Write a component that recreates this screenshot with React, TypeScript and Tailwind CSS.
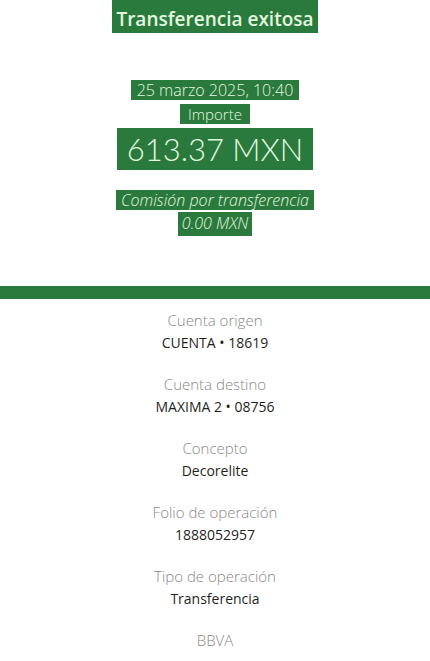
import React from 'react';

const rows = [
  { label: 'Cuenta origen', value: 'CUENTA • 18619' },
  { label: 'Cuenta destino', value: 'MAXIMA 2 • 08756' },
  { label: 'Concepto', value: 'Decorelite' },
  { label: 'Folio de operación', value: '1888052957' },
  { label: 'Tipo de operación', value: 'Transferencia' },
];

const App: React.FC = () => {
  return (
    <div className="w-[430px] h-[661px] overflow-hidden bg-white font-['Open_Sans',sans-serif]">
      {/* encabezado */}
      <div className="flex flex-col items-center">
        <span className="px-[4px] pt-[8px] pb-[2px] bg-[#2a7a3e] text-[#e4f7df] text-[19px] font-semibold leading-[23px]">
          Transferencia exitosa
        </span>

        <span className="mt-[47px] px-[6px] bg-[#2a7a3e] text-[#e4f7df] text-[16px] font-light leading-[20px]">
          25 marzo 2025, 10:40
        </span>
        <span className="mt-[4px] px-[8px] bg-[#2a7a3e] text-[#e4f7df] text-[15px] font-light leading-[20px]">
          Importe
        </span>
        <span className="mt-[4px] px-[10px] bg-[#2a7a3e] text-[#e4f7df] text-[31px] font-light leading-[42px] font-['Lato',sans-serif]">
          613.37 MXN
        </span>

        <span className="mt-[20px] px-[5px] bg-[#2a7a3e] text-[#e4f7df] text-[16px] italic font-light leading-[20px]">
          Comisión por transferencia
        </span>
        <span className="mt-[2px] px-[4px] pb-[2px] bg-[#2a7a3e] text-[#e4f7df] text-[16px] italic font-light leading-[22px]">
          0.00 MXN
        </span>
      </div>

      <div className="mt-[50px] h-[13px] bg-[#2a7a3e]" />

      {/* detalle */}
      <div className="flex flex-col items-center pt-[11px]">
        {rows.map((r) => (
          <div key={r.label} className="flex flex-col items-center h-[64px]">
            <span className="text-[15px] leading-[20px] text-[#888888] font-light">{r.label}</span>
            <span className="mt-[3px] text-[14px] leading-[20px] text-[#1f1f1f]">{r.value}</span>
          </div>
        ))}
        <span className="text-[15px] leading-[20px] text-[#888888] font-light">BBVA</span>
      </div>
    </div>
  );
};

export default App;
